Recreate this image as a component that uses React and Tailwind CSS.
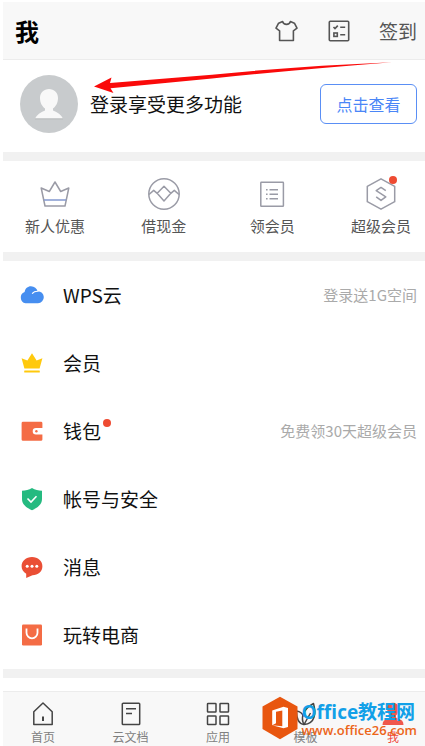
import React from 'react';

const TeeIcon = () => (
  <svg className="h-6 w-6" viewBox="0 0 24 24" fill="none" stroke="#555" strokeWidth="1.6" strokeLinejoin="round">
    <path d="M7.6 2.5 C8.6 6.3 14.4 6.3 15.4 2.5 L19.4 4.2 L22 9.2 L18.4 11.8 V21.5 H4.6 V11.8 L1 9.2 L3.6 4.2 Z" />
  </svg>
);

const TaskIcon = () => (
  <svg className="h-6 w-6" viewBox="0 0 24 24" fill="none" stroke="#555" strokeWidth="1.6">
    <rect x="2.3" y="2.3" width="19.4" height="19.4" rx="1" />
    <path d="M6.5 8 L8 9.6 L10.8 6.6 M13.2 8.3 H18.2 M13.2 15.8 H18.2" />
    <rect x="6.9" y="14" width="3.4" height="3.4" />
  </svg>
);

const OfferIcon = () => (
  <svg className="h-8 w-8" viewBox="0 0 32 32" fill="none" stroke="#9a9ba6" strokeWidth="1.5" strokeLinejoin="round">
    <path d="M2.2 10 L10.3 13.5 L16 4 L21.7 13.5 L29.8 10 L26 28 H6 Z" />
    <path d="M5 22 H27" stroke="#8398cf" />
  </svg>
);

const CashIcon = () => (
  <svg className="h-8 w-8" viewBox="0 0 32 32" fill="none" stroke="#9a9ba6" strokeWidth="1.5" strokeLinejoin="round">
    <circle cx="16" cy="16" r="15.2" />
    <path d="M1 16.5 L5.7 12.4 L9.2 15.3 L16 8.3 L22.8 15.3 L26.3 12.4 L31 16.5 M9.2 15.3 L16 23 L22.8 15.3" />
  </svg>
);

const ClaimIcon = () => (
  <svg className="h-8 w-8" viewBox="0 0 32 32" fill="none" stroke="#9a9ba6" strokeWidth="1.5">
    <rect x="4.8" y="4.3" width="22.6" height="24" rx=".6" />
    <path d="M13.5 11.8 H22 M13.5 16.3 H22 M13.5 20.8 H22 M10 11.8 H11.6 M10 16.3 H11.6 M10 20.8 H11.6" />
  </svg>
);

const SuperIcon = () => (
  <svg className="h-8 w-8" viewBox="0 0 32 32" fill="none" stroke="#9a9ba6" strokeWidth="1.5" strokeLinejoin="round">
    <path d="M16 .8 L29.7 8.3 V23.7 L16 31.2 L2.3 23.7 V8.3 Z" />
    <path d="M20.8 12.7 L16 9.4 L11.2 12.7 L20.8 18.8 L16 22.4 L11.2 18.8" />
  </svg>
);

const CloudIcon = () => (
  <svg className="h-6 w-6" viewBox="0 0 24 24">
    <path
      d="M5.5 20.2 A5.9 5.9 0 0 1 4.6 8.9 C5.3 5.4 7.6 3.2 11 3.2 C14.4 3.2 16.8 5.4 17.6 8.2 A6 6 0 0 1 18 20.2 Z"
      fill="#468ef0"
    />
    <path d="M12.4 10.4 C13.5 8.9 15.3 8.1 18 8.2" fill="none" stroke="#fff" strokeWidth="1.1" strokeLinecap="round" />
  </svg>
);

const CrownIcon = () => (
  <svg className="h-6 w-6" viewBox="0 0 24 24" fill="#ffc90d">
    <path d="M1.6 7.2 L7.4 9.4 L12 2.2 L16.6 9.4 L22.4 7.2 L19.6 17.5 H4.4 Z" />
    <rect x="4.2" y="19.4" width="15.6" height="2.2" rx=".5" />
  </svg>
);

const WalletIcon = () => (
  <svg className="h-6 w-6" viewBox="0 0 24 24">
    <path
      d="M3 2.8 H21 Q22.4 2.8 22.4 4.2 V9 H16 A3.3 3.3 0 0 0 16 15.6 H22.4 V20.4 Q22.4 21.8 21 21.8 H3 Q1.6 21.8 1.6 20.4 V4.2 Q1.6 2.8 3 2.8 Z"
      fill="#f46c45"
    />
    <circle cx="16.4" cy="12.3" r="1.2" fill="#f46c45" />
  </svg>
);

const ShieldIcon = () => (
  <svg className="h-6 w-6" viewBox="0 0 24 24">
    <path d="M12 1 C15 3 18.5 3.6 22 3.8 V12 C22 17.5 17.5 20.8 12 23.2 C6.5 20.8 2 17.5 2 12 V3.8 C5.5 3.6 9 3 12 1 Z" fill="#25ba80" />
    <path d="M7.5 11.5 L11 15 L16.5 9.3" fill="none" stroke="#fff" strokeWidth="1.6" />
  </svg>
);

const MessageIcon = () => (
  <svg className="h-6 w-6" viewBox="0 0 24 24">
    <path
      d="M12 2 C18 2 22.4 6 22.4 11.2 C22.4 16.5 18 20.2 12.5 20.2 L6.2 23 V18.7 C3.3 17 1.6 14.5 1.6 11.2 C1.6 6 6 2 12 2 Z"
      fill="#ea4f35"
    />
    <g fill="#fff">
      <circle cx="7.2" cy="11.2" r="1.5" />
      <circle cx="12" cy="11.2" r="1.5" />
      <circle cx="16.8" cy="11.2" r="1.5" />
    </g>
  </svg>
);

const ShopIcon = () => (
  <svg className="h-6 w-6" viewBox="0 0 24 24">
    <rect x="2" y="1.5" width="20" height="21" rx="1.2" fill="#f46c45" />
    <path d="M6.5 5.5 V9.8 A5.5 5.5 0 0 0 17.5 9.8 V5.5" fill="none" stroke="#fff" strokeWidth="1.8" />
  </svg>
);

const HomeIcon = () => (
  <svg className="h-6 w-6" viewBox="0 0 24 24" fill="none" stroke="#444" strokeWidth="1.5" strokeLinejoin="round">
    <path d="M2.8 22.5 V9.8 L12 1 L21.2 9.8 V22.5 Z" />
    <path d="M12 14.5 V19" strokeWidth="2" />
  </svg>
);

const DocsIcon = () => (
  <svg className="h-6 w-6" viewBox="0 0 24 24" fill="none" stroke="#444" strokeWidth="1.5">
    <rect x="3.3" y="1.3" width="17.4" height="21.2" rx=".8" />
    <path d="M7 6.8 H17 M7 11.5 H13" />
  </svg>
);

const AppsIcon = () => (
  <svg className="h-6 w-6" viewBox="0 0 24 24" fill="none" stroke="#444" strokeWidth="1.5">
    <rect x="1.5" y="1.5" width="8.5" height="8.5" rx=".6" />
    <rect x="14" y="1.5" width="8.5" height="8.5" rx=".6" />
    <rect x="1.5" y="14" width="8.5" height="8.5" rx=".6" />
    <rect x="14" y="14" width="8.5" height="8.5" rx=".6" />
  </svg>
);

const TemplateIcon = () => (
  <svg className="h-6 w-6" viewBox="0 0 24 24" fill="none" stroke="#444" strokeWidth="1.5" strokeLinejoin="round">
    <path d="M10 22.5 C5 22 2.5 17 2.5 9 C6 9.5 8.5 11.5 9.5 14.5" />
    <path d="M10 22.5 C7 17 7.5 8 19.5 1.5 C22 11 21.5 21.5 10 22.5 L16.5 11" />
  </svg>
);

const MeIcon = () => (
  <svg className="h-6 w-6" viewBox="0 0 24 24" fill="#f0584c">
    <path d="M12 .8 C15.5 .8 17.8 3.2 17.8 6.5 C17.8 9.5 16.8 12 15 13.6 V15.5 L21 18.5 Q22.5 20 22.5 23 H1.5 Q1.5 20 3 18.5 L9 15.5 V13.6 C7.2 12 6.2 9.5 6.2 6.5 C6.2 3.2 8.5 .8 12 .8 Z" />
  </svg>
);

const shortcuts = [
  { label: '新人优惠', icon: OfferIcon },
  { label: '借现金', icon: CashIcon },
  { label: '领会员', icon: ClaimIcon },
  { label: '超级会员', icon: SuperIcon, dot: true },
];

const menu = [
  { label: 'WPS云', icon: CloudIcon, hint: '登录送1G空间' },
  { label: '会员', icon: CrownIcon },
  { label: '钱包', icon: WalletIcon, hint: '免费领30天超级会员', dot: true },
  { label: '帐号与安全', icon: ShieldIcon },
  { label: '消息', icon: MessageIcon },
  { label: '玩转电商', icon: ShopIcon },
];

const tabs = [
  { label: '首页', icon: HomeIcon },
  { label: '云文档', icon: DocsIcon },
  { label: '应用', icon: AppsIcon },
  { label: '模板', icon: TemplateIcon },
  { label: '我', icon: MeIcon, active: true },
];

const Watermark = () => (
  <div className="pointer-events-none absolute top-1 right-2 flex items-center gap-1">
    <svg className="h-11 w-9" viewBox="0 0 36 44">
      <path d="M18 .8 L35.5 10.5 V33 L18 43.3 L.5 33 V10.5 Z" fill="#e8560f" />
      <path
        d="M10.2 14.5 L21.5 10.8 L26 12 V31 L21.5 32.3 L10.2 29.2 L20.3 30.2 V14.4 L14 15.8 V27.2 L10.2 29.2 Z"
        fill="#fff"
      />
    </svg>
    <div className="pt-1 font-['Open_Sans','Noto_Sans_CJK_SC',sans-serif]">
      <p className="text-[19px] leading-5 font-bold whitespace-nowrap text-[#12a0e8]">Office教程网</p>
      <p className="text-[13px] leading-4 font-semibold whitespace-nowrap text-[#ec6518]">www.office26.com</p>
    </div>
  </div>
);

const App = () => {
  return (
    <div className="bg-white pl-[3px] font-['Noto_Sans_CJK_SC',sans-serif] text-[#111]">
      {/* Header */}
      <header className="mt-0.5 flex h-[58px] items-center justify-between border-b border-[#ececec] bg-[#f8f8f8] pr-2 pl-3">
        <h1 className="text-2xl font-bold text-black">我</h1>
        <div className="flex items-center gap-7">
          <button aria-label="皮肤">
            <TeeIcon />
          </button>
          <button aria-label="任务">
            <TaskIcon />
          </button>
          <button className="text-[19px] leading-7 text-[#555]">签到</button>
        </div>
      </header>

      <main>
        {/* Profile */}
        <section className="relative flex h-[92px] items-center pr-2 pb-1 pl-[17px]">
          <svg className="h-[58px] w-[58px]" viewBox="0 0 58 58">
            <circle cx="29" cy="29" r="29" fill="#c8cbcd" />
            <path
              d="M29 14 C34 14 38 17.5 38 23 C38 28 35.7 31.5 33 33.5 V35.5 Q40 38 43 43.5 H15 Q18 38 25 35.5 V33.5 C22.3 31.5 20 28 20 23 C20 17.5 24 14 29 14 Z"
              fill="#f8f8f8"
            />
            <path d="M15 43.9 H43" stroke="#b3b6b8" strokeWidth=".8" />
          </svg>
          <p className="ml-3 text-[19px] leading-7">登录享受更多功能</p>
          <button className="ml-auto h-10 w-[97px] rounded-md border border-[#5a8ff5] text-base text-[#4a86f7]">点击查看</button>
          <svg className="pointer-events-none absolute top-0 left-[91px] h-10 w-[300px]" viewBox="0 0 300 40" fill="#fa0a0a">
            <path d="M0 26.5 L17.5 17.5 L16 23 L118 14.8 Q205 6 298 2.2 Q205 9.5 118 18.4 L16.5 28.3 L19.5 33 Z" />
          </svg>
        </section>

        {/* Shortcuts */}
        <section className="flex justify-between border-y-[9px] border-[#f1f1f1] pt-[17px] pr-3.5 pb-3.5 pl-[22px]">
          {shortcuts.map(({ label, icon: Icon, dot }) => (
            <button key={label} className="flex w-[60px] flex-col items-center gap-[3px]">
              <span className="relative">
                <Icon />
                {dot && <span className="absolute -top-0.5 right-0 h-2 w-2 rounded-full bg-[#ee4b32]" />}
              </span>
              <span className="text-[15px] leading-[25px] whitespace-nowrap text-[#555]">{label}</span>
            </button>
          ))}
        </section>

        {/* Menu */}
        <ul className="border-b-[9px] border-[#f1f1f1]">
          {menu.map(({ label, icon: Icon, hint, dot }) => (
            <li key={label}>
              <a href="#" className="flex h-[68px] items-center pr-2 pl-[17px]">
                <Icon />
                <span className="relative ml-[19px] text-[19px] leading-7">
                  {label}
                  {dot && <span className="absolute top-0.5 -right-2.5 h-2 w-2 rounded-full bg-[#ee4b32]" />}
                </span>
                {hint && <span className="ml-auto text-[15px] leading-6 text-[#aaa]">{hint}</span>}
              </a>
            </li>
          ))}
        </ul>
      </main>

      {/* Bottom tabs */}
      <nav className="relative mt-[13px] flex h-[55px] justify-between border-t border-[#ececec] bg-[#f8f8f8] pt-2.5 pr-3 pl-5">
        {tabs.map(({ label, icon: Icon, active }) => (
          <a
            key={label}
            href="#"
            className={`flex w-10 flex-col items-center gap-[3px] text-xs whitespace-nowrap ${active ? 'text-[#f0483c]' : 'text-[#808080]'}`}
          >
            <Icon />
            {label}
          </a>
        ))}
        <Watermark />
      </nav>
    </div>
  );
};

export default App;
